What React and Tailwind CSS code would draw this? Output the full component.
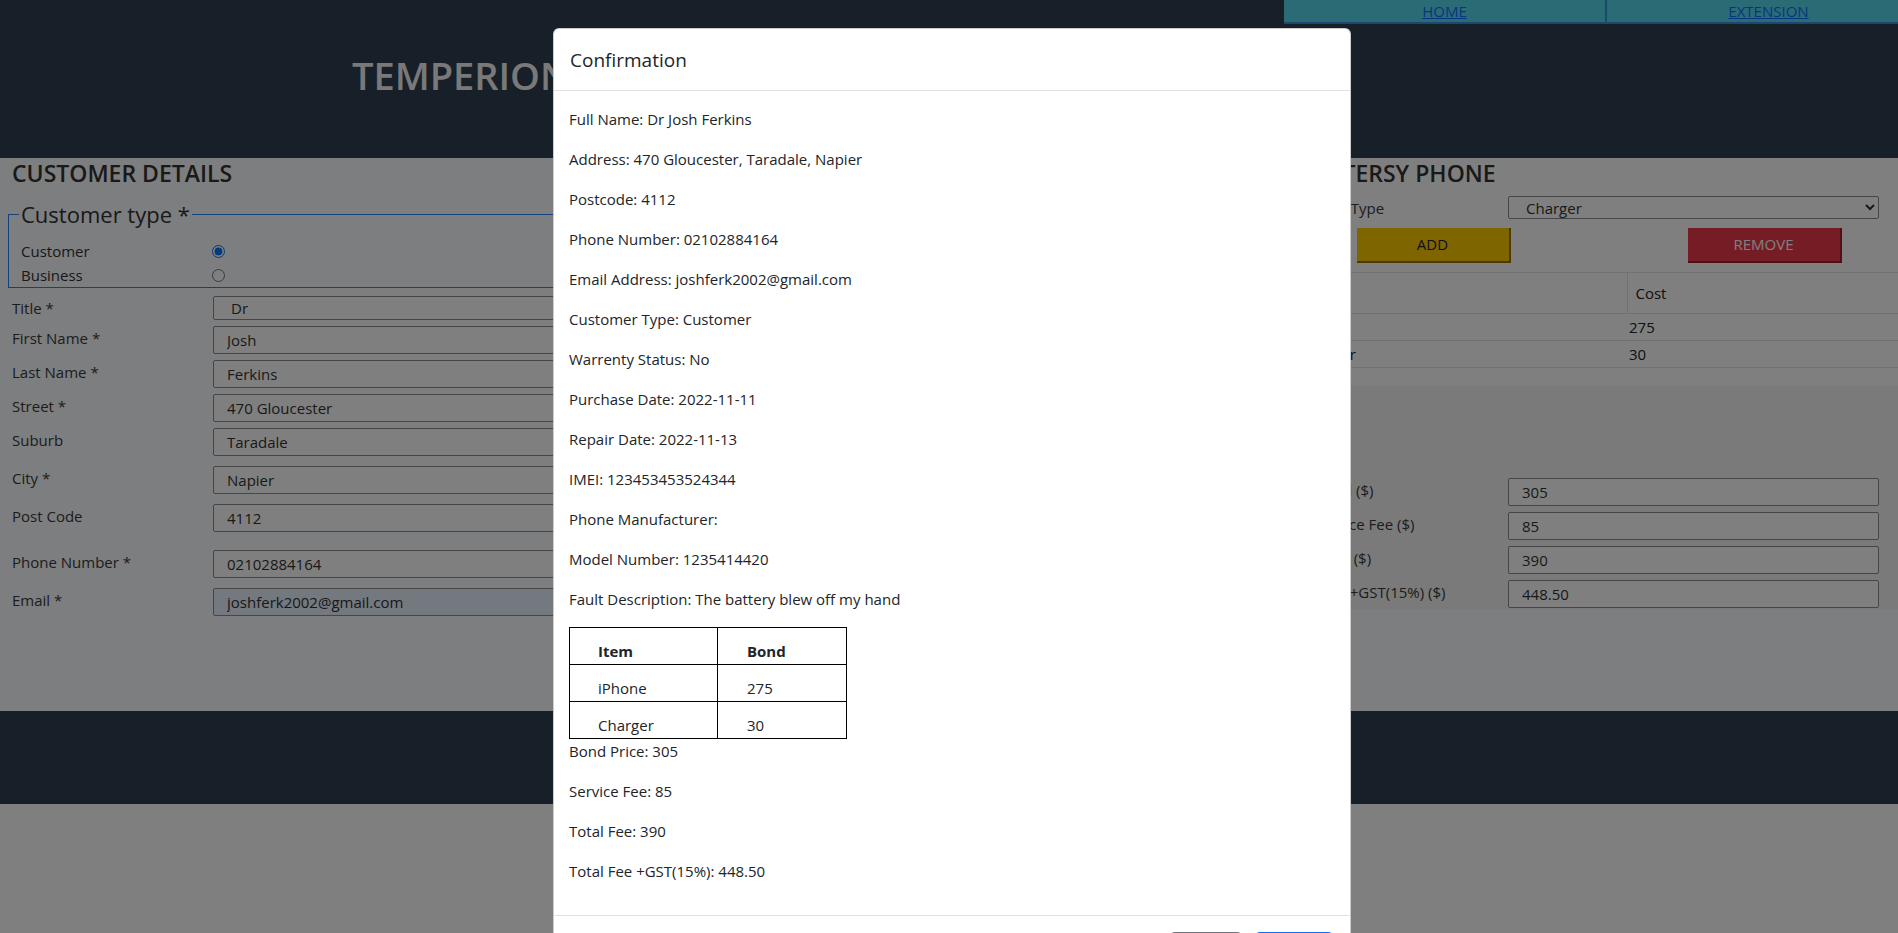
import React from "react";

const sans = "font-['Open_Sans','Noto_Sans',sans-serif]";

const summary = [
  "Full Name: Dr Josh Ferkins",
  "Address: 470 Gloucester, Taradale, Napier",
  "Postcode: 4112",
  "Phone Number: 02102884164",
  "Email Address: joshferk2002@gmail.com",
  "Customer Type: Customer",
  "Warrenty Status: No",
  "Purchase Date: 2022-11-11",
  "Repair Date: 2022-11-13",
  "IMEI: 123453453524344",
  "Phone Manufacturer:",
  "Model Number: 1235414420",
  "Fault Description: The battery blew off my hand",
];

const fees = [
  "Bond Price: 305",
  "Service Fee: 85",
  "Total Fee: 390",
  "Total Fee +GST(15%): 448.50",
];

const customerRows = [
  { label: "First Name *", value: "Josh", gap: "mt-[6px]" },
  { label: "Last Name *", value: "Ferkins", gap: "mt-[6px]" },
  { label: "Street *", value: "470 Gloucester", gap: "mt-[6px]" },
  { label: "Suburb", value: "Taradale", gap: "mt-[6px]" },
  { label: "City *", value: "Napier", gap: "mt-[10px]" },
  { label: "Post Code", value: "4112", gap: "mt-[10px]" },
  { label: "Phone Number *", value: "02102884164", gap: "mt-[18px]" },
  { label: "Email *", value: "joshferk2002@gmail.com", gap: "mt-[10px]", autofill: true },
];

const costRows = [
  { label: "Bond ($)", value: "305" },
  { label: "Service Fee ($)", value: "85" },
  { label: "Total ($)", value: "390" },
  { label: "Total+GST(15%) ($)", value: "448.50" },
];

function TextInput({ value, autofill }) {
  return (
    <input
      readOnly
      value={value}
      className={
        "h-[28px] w-[371px] shrink-0 rounded-[2px] border border-[#8c8c8c] pl-[13px] text-[15px] text-[#333] outline-none " +
        (autofill ? "bg-[#e8f0fe]" : "bg-white")
      }
    />
  );
}

function LeftRow({ label, gap, children }) {
  return (
    <div className={"flex items-start " + gap}>
      <label className="w-[213px] shrink-0 pl-3 pt-[1px] text-[15px] leading-[22px] text-[#3a3a3a]">
        {label}
      </label>
      {children}
    </div>
  );
}

function RightRow({ label, children }) {
  return (
    <div className="flex items-start">
      <label className="w-[242px] shrink-0 pl-[49px] pt-[1px] text-[15px] leading-[22px] text-[#3a3a3a]">
        {label}
      </label>
      {children}
    </div>
  );
}

export default function App() {
  return (
    <div className={"relative h-[933px] w-[1898px] overflow-hidden bg-white " + sans}>
      {/* header */}
      <header className="h-[158px] bg-[#2e3e52]">
        <nav className="ml-[1284px] flex w-[646px]">
          <a className="block h-6 w-[323px] border-r-2 border-b-2 border-[#3690dc] bg-[#56d6ec] text-center text-[15px] leading-[22px] text-[#0d6efd] underline">
            HOME
          </a>
          <a className="block h-6 w-[323px] border-b-2 border-[#3690dc] bg-[#56d6ec] text-center text-[15px] leading-[22px] text-[#0d6efd] underline">
            EXTENSION
          </a>
        </nav>
        <h1 className="mt-[28px] pl-[352px] text-[38px] font-semibold leading-[46px] text-[#f2f2f2]">
          TEMPERION REPAIR SERVICES
        </h1>
      </header>

      {/* main form */}
      <main className="flex h-[553px] bg-[#fafcfe] text-[#333]">
        {/* customer details */}
        <section className="w-[633px] shrink-0">
          <h2 className="pl-3 text-[23px] font-semibold leading-[30px] text-[#333]">CUSTOMER DETAILS</h2>
          <fieldset className="mx-2 mt-[12px] border border-[#2f80ff] px-3">
            <legend className="-ml-[2px] px-[2px] text-[22px] leading-[28px] text-[#333]">Customer type *</legend>
            <div className="mt-[11px] flex h-6 items-center text-[15px]">
              <span className="w-[191px]">Customer</span>
              <input type="radio" checked readOnly className="m-0 size-[13px]" />
            </div>
            <div className="flex h-[24px] items-center text-[15px]">
              <span className="w-[191px]">Business</span>
              <input type="radio" readOnly checked={false} className="m-0 size-[13px]" />
            </div>
          </fieldset>

          <LeftRow label="Title *" gap="mt-[8px]">
            <select
              value="Dr"
              onChange={() => {}}
              className="h-[24px] w-[371px] rounded-[2px] border border-[#8c8c8c] bg-white pl-[13px] text-[15px] text-[#333]"
            >
              <option>Dr</option>
            </select>
          </LeftRow>
          {customerRows.map((r) => (
            <LeftRow key={r.label} label={r.label} gap={r.gap}>
              <TextInput value={r.value} autofill={r.autofill} />
            </LeftRow>
          ))}
        </section>

        {/* repair details (behind the dialog) */}
        <section className="w-[633px] shrink-0" />

        {/* courtesy phone */}
        <section className="flex-1">
          <div className="bg-white pb-[18px]">
            <h2 className="pl-3 text-[23px] font-semibold leading-[30px] text-[#333]">COURTERSY PHONE</h2>
            <div className="mt-2">
              <RightRow label="Item Type">
                <select
                  value="Charger"
                  onChange={() => {}}
                  className="h-[23px] w-[371px] rounded-[2px] border border-[#8c8c8c] bg-white pl-[13px] text-[15px] text-[#333]"
                >
                  <option>iPhone</option>
                  <option>Charger</option>
                </select>
              </RightRow>
            </div>
            <div className="ml-[2px] mt-[9px] grid w-[662px] grid-cols-2">
              <button className="h-[35px] w-[154px] justify-self-center border-r-2 border-b-2 border-[#9a7400] bg-[#ffca00] text-[15px] text-[#222]">
                ADD
              </button>
              <button className="h-[35px] w-[154px] justify-self-center border-r-2 border-b-2 border-[#a01e28] bg-[#ec3848] text-[15px] text-white">
                REMOVE
              </button>
            </div>
            <table className="mt-[9px] w-full border-collapse text-[15px] text-[#222]">
              <thead>
                <tr className="h-[41px] border-y border-[#dee2e6]">
                  <th className="w-[361px] pl-[34px] text-left font-normal">Item</th>
                  <th className="border-l border-[#dee2e6] pl-[8px] text-left font-normal">Cost</th>
                </tr>
              </thead>
              <tbody>
                <tr className="h-[27px] border-b border-[#dee2e6]">
                  <td className="pl-[34px]">iPhone</td>
                  <td className="pl-[2px]">275</td>
                </tr>
                <tr className="h-[27px] border-b border-[#dee2e6]">
                  <td className="pl-[34px]">Charger</td>
                  <td className="pl-[2px]">30</td>
                </tr>
              </tbody>
            </table>
          </div>
          <div className="flex h-[223px] flex-col gap-[6px] bg-[#f4f4f4] pt-[92px]">
            {costRows.map((r) => (
              <RightRow key={r.label} label={r.label}>
                <TextInput value={r.value} />
              </RightRow>
            ))}
          </div>
        </section>
      </main>

      <footer className="h-[93px] bg-[#2e3e52]" />

      {/* backdrop */}
      <div className="absolute inset-0 bg-black/50" />

      {/* confirmation dialog */}
      <div className="absolute left-[553px] top-[28px] w-[798px] rounded-[6px] border border-black/20 bg-white text-[#212529]">
        <div className="border-b border-[#dee2e6] px-4 pt-4 pb-[15px]">
          <h5 className="text-[19px] font-medium leading-[30px]">Confirmation</h5>
        </div>
        <div className="py-4 pl-[15px] pr-4 text-[15px] leading-6">
          {summary.map((line) => (
            <p key={line} className="mb-4">
              {line}
            </p>
          ))}
          <table className="w-[278px] border-collapse border border-black">
            <thead>
              <tr>
                <th className="h-[37px] w-[148px] border border-black px-[28px] pt-[11px] text-left align-top font-bold">Item</th>
                <th className="h-[37px] border border-black px-[29px] pt-[11px] text-left align-top font-bold">Bond</th>
              </tr>
            </thead>
            <tbody>
              <tr>
                <td className="h-[37px] border border-black px-[28px] pt-[11px] align-top">iPhone</td>
                <td className="h-[37px] border border-black px-[29px] pt-[11px] align-top">275</td>
              </tr>
              <tr>
                <td className="h-[37px] border border-black px-[28px] pt-[11px] align-top">Charger</td>
                <td className="h-[37px] border border-black px-[29px] pt-[11px] align-top">30</td>
              </tr>
            </tbody>
          </table>
          {fees.map((line) => (
            <p key={line} className="mb-4">
              {line}
            </p>
          ))}
        </div>
        <div className="flex justify-end gap-[11px] border-t border-[#dee2e6] px-4 pt-4 pb-3">
          <button className="h-[38px] w-[74px] rounded-[6px] bg-[#6c757d] text-[15px] text-white">Cancel</button>
          <button className="h-[38px] w-[80px] rounded-[6px] bg-[#0d6efd] text-[15px] text-white">Confirm</button>
        </div>
      </div>
    </div>
  );
}
